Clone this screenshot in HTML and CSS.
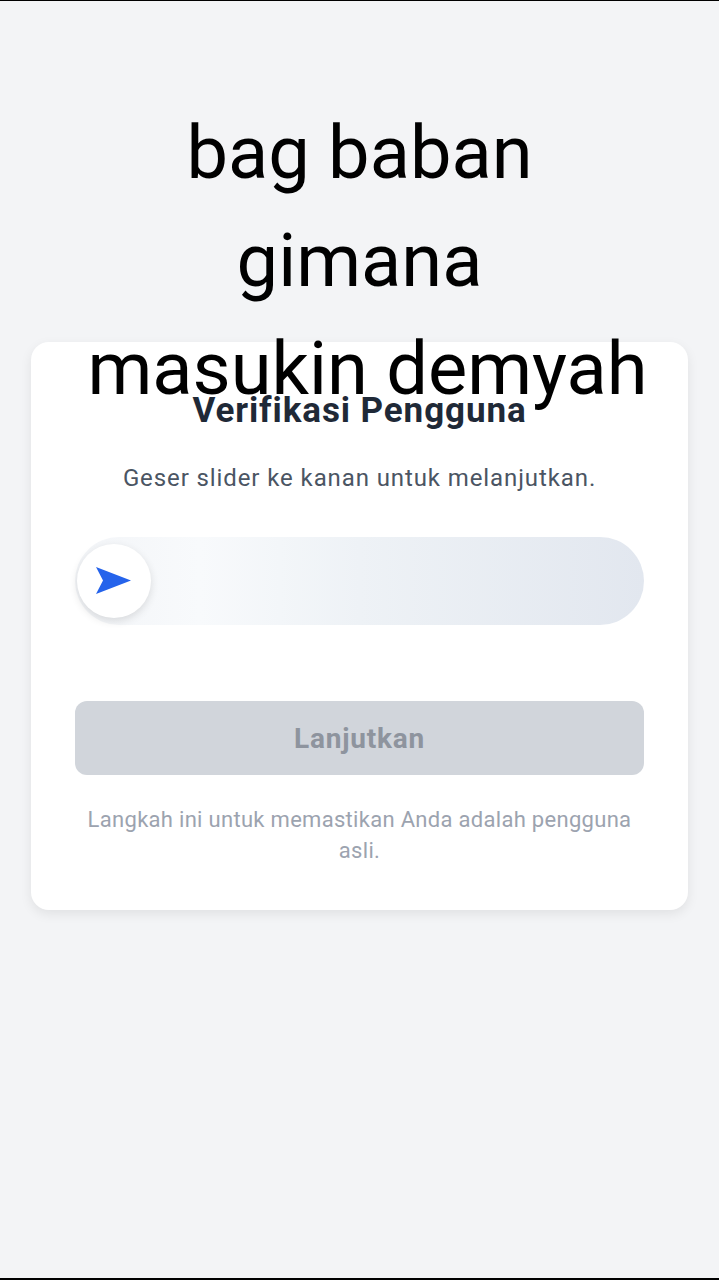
FILE: index.html
```html
<!DOCTYPE html>
<html>
<head>
  <title>Verifikasi Pengguna</title>
  <link rel="stylesheet" href="styles.css">
</head>
<body>
  <div class="page">
    <div class="card">
      <h1>Verifikasi Pengguna</h1>
      <p class="hint">Geser slider ke kanan untuk melanjutkan.</p>
      <div class="slider">
        <div class="knob">
          <svg width="38" height="30" viewBox="0 0 38 30">
            <polygon points="2,1 37,14.5 2,28 9,14.5" fill="#2563eb"/>
          </svg>
        </div>
      </div>
      <button class="next-btn" disabled>Lanjutkan</button>
      <p class="note">Langkah ini untuk memastikan Anda adalah pengguna asli.</p>
    </div>

    <div class="caption">bag baban<br>gimana<br><span class="last">masukin demyah</span></div>
  </div>
</body>
</html>
```

FILE: styles.css
```css
* {
  box-sizing: border-box;
}

body {
  margin: 0;
  padding: 0;
  background-color: #f3f4f6;
  font-family: 'Roboto', 'Liberation Sans', sans-serif;
}

.page {
  position: relative;
  height: 1280px;
  border-top: 1px solid #000;
  border-bottom: 2px solid #000;
  padding: 341px 31px 0;
}

.card {
  background: #ffffff;
  border-radius: 18px;
  box-shadow: 0 4px 12px rgba(0, 0, 0, 0.08);
  padding: 47px 44px 44px;
  text-align: center;
}

h1 {
  margin: 0;
  font-size: 35px;
  line-height: 44px;
  font-weight: 700;
  letter-spacing: 0.9px;
  color: #1f2937;
}

.hint {
  margin: 29px 0 0;
  font-size: 24px;
  line-height: 32px;
  letter-spacing: 0.9px;
  color: #4b5563;
}

.slider {
  position: relative;
  margin-top: 43px;
  height: 88px;
  border-radius: 44px;
  background: linear-gradient(90deg, #f3f5f8 0%, #f8fafc 22%, #eef2f6 50%, #e2e7ef 100%);
}

.knob {
  position: absolute;
  left: 2px;
  top: 7px;
  width: 74px;
  height: 74px;
  border-radius: 50%;
  background: #ffffff;
  box-shadow: 0 3px 8px rgba(0, 0, 0, 0.12);
  display: flex;
  align-items: center;
  justify-content: center;
  padding-right: 2px;
}

.next-btn {
  display: block;
  width: 100%;
  height: 74px;
  margin-top: 76px;
  border: none;
  border-radius: 12px;
  background-color: #d1d5db;
  color: #8e949e;
  font-family: inherit;
  font-size: 28px;
  font-weight: 700;
  letter-spacing: 0.8px;
}

.note {
  margin: 29px 0 0;
  font-size: 22px;
  line-height: 31px;
  letter-spacing: 0.3px;
  color: #9ca3af;
}

.caption {
  position: absolute;
  left: 0;
  right: 0;
  top: 98px;
  text-align: center;
  font-size: 74px;
  line-height: 108px;
  color: #000;
}

.caption .last {
  padding-left: 16px;
}
```
